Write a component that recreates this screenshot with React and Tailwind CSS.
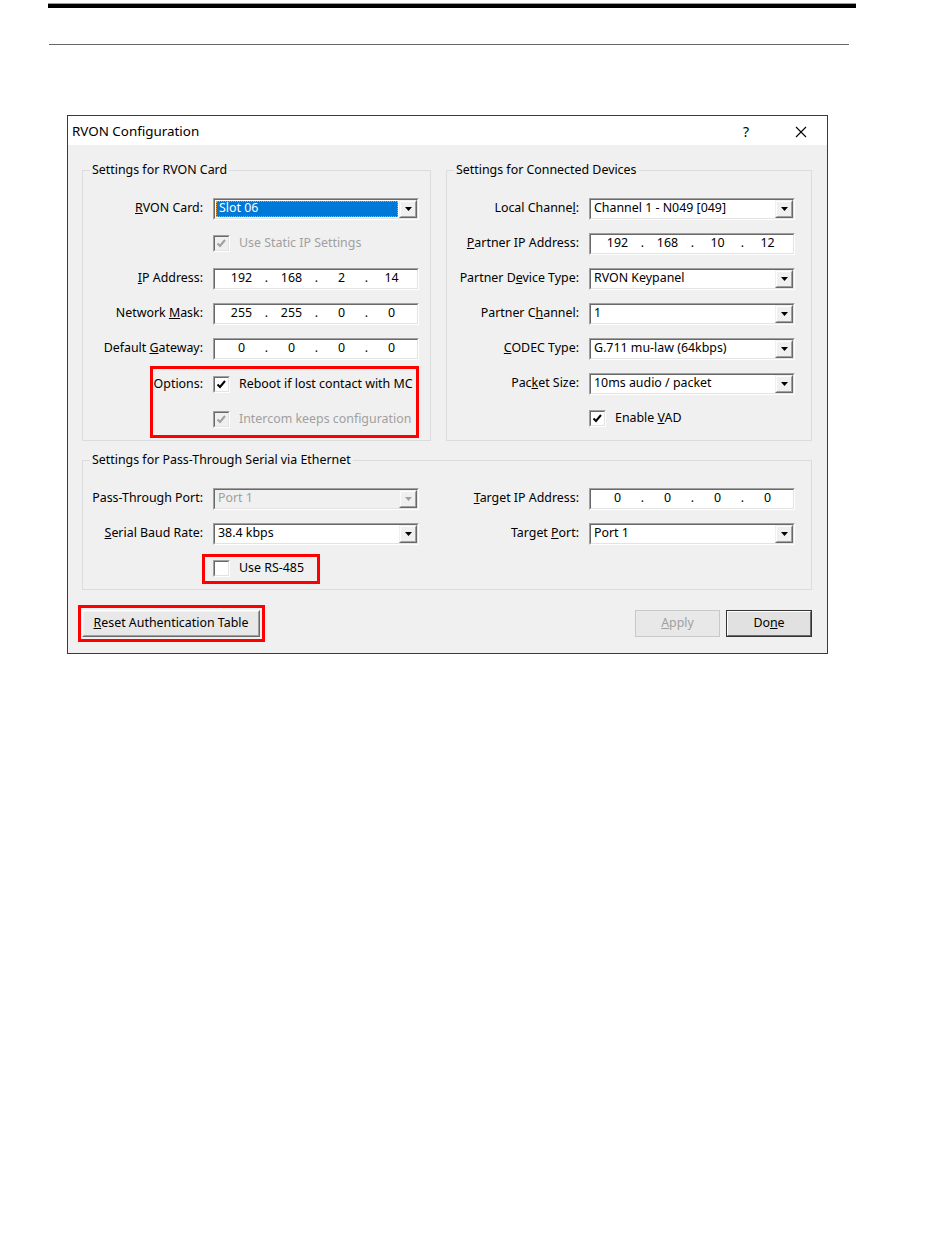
import React from 'react';

// Windows-style 3D sunken frame used by edits, combos and checkboxes
function Sunken({ className = '', inner = 'bg-white', children }) {
  return (
    <div className={`border border-t-[#a0a0a0] border-l-[#a0a0a0] border-r-white border-b-white ${className}`}>
      <div className={`h-full border border-t-[#696969] border-l-[#696969] border-r-[#e3e3e3] border-b-[#e3e3e3] ${inner}`}>
        {children}
      </div>
    </div>
  );
}

function Arrow({ disabled }) {
  return (
    <svg width="7" height="4" viewBox="0 0 7 4">
      <path d="M0 0h7L3.5 4z" fill={disabled ? '#a0a0a0' : '#000'} />
    </svg>
  );
}

function Combo({ value, selected, disabled }) {
  return (
    <Sunken className="w-[206px] h-[22px]" inner={disabled ? 'bg-[#f0f0f0]' : 'bg-white'}>
      <div className="flex h-full items-stretch">
        <div className="flex-1 flex items-center p-px min-w-0">
          {selected ? (
            <span className="flex-1 h-full flex items-center px-[2px] bg-[#0078d7] text-white border border-dotted border-[#e8a040]">
              {value}
            </span>
          ) : (
            <span className={`px-[2px] ${disabled ? 'text-[#a0a0a0]' : ''}`}>{value}</span>
          )}
        </div>
        <div className="w-[18px] border border-t-[#f0f0f0] border-l-[#f0f0f0] border-r-[#696969] border-b-[#696969]">
          <div className="h-full flex items-center justify-center bg-[#f0f0f0] border border-t-white border-l-white border-r-[#a0a0a0] border-b-[#a0a0a0]">
            <Arrow disabled={disabled} />
          </div>
        </div>
      </div>
    </Sunken>
  );
}

function IpField({ parts }) {
  return (
    <Sunken className="w-[206px] h-[22px]">
      <div className="flex h-full items-center pl-[8px]">
        {parts.map((p, i) => (
          <React.Fragment key={i}>
            {i > 0 && <span className="w-[13px] text-center">.</span>}
            <span className="w-[37px] text-center">{p}</span>
          </React.Fragment>
        ))}
      </div>
    </Sunken>
  );
}

function Check({ checked, disabled, children }) {
  return (
    <div className="flex items-center gap-[9px]">
      <Sunken className="w-[17px] h-[17px]" inner={disabled ? 'bg-[#f0f0f0]' : 'bg-white'}>
        {checked && (
          <svg width="15" height="15" viewBox="0 0 15 15" className="-mt-px -ml-px">
            <path d="M3.5 7.5l2.5 2.5 5-6" fill="none" stroke={disabled ? '#a0a0a0' : '#000'} strokeWidth="2" />
          </svg>
        )}
      </Sunken>
      <span className={disabled ? 'text-[#a0a0a0]' : ''}>{children}</span>
    </div>
  );
}

function Row({ label, labelW = 'w-[120px]', children }) {
  return (
    <div className="h-[35px] flex items-center gap-[10px]">
      <div className={`${labelW} text-right whitespace-nowrap`}>{label}</div>
      {children}
    </div>
  );
}

function Group({ title, className = '', children }) {
  return (
    <fieldset className={`border border-[#dcdcdc] ${className}`}>
      <legend className="ml-[7px] px-[2px] leading-[16px]">{title}</legend>
      {children}
    </fieldset>
  );
}

function Button({ children, className = '', disabled, isDefault }) {
  if (isDefault) {
    return (
      <div className={`h-[27px] border border-[#333] ${className}`}>
        <div className="h-full border border-t-white border-l-white border-r-[#696969] border-b-[#696969] bg-[#e1e1e1] flex items-center justify-center">
          {children}
        </div>
      </div>
    );
  }
  return (
    <div className={`h-[27px] border ${disabled ? 'border-[#c8c8c8] text-[#a0a0a0]' : 'border-t-white border-l-white border-r-[#696969] border-b-[#696969]'} ${className}`}>
      <div className={`h-full flex items-center justify-center bg-[#e8e8e8] border ${disabled ? 'border-[#e8e8e8]' : 'border-t-[#f0f0f0] border-l-[#f0f0f0] border-r-[#a0a0a0] border-b-[#a0a0a0]'}`}>
        {children}
      </div>
    </div>
  );
}

export default function App() {
  return (
    <div className="min-h-screen bg-white text-black text-[12.4px] font-['Noto_Sans',sans-serif]">
      {/* page header rules */}
      <div className="pt-[3px]">
        <div className="ml-[48px] w-[808px] h-[5px] bg-black border-t border-[#9a9a9a]" />
      </div>
      <div className="mt-[36px] ml-[49px] w-[800px] h-px bg-[#666]" />

      {/* dialog */}
      <div className="mt-[70px] ml-[67px] w-[761px] border border-[#3a3a3a] bg-[#f0f0f0]">
        <div className="h-[29px] bg-white flex items-center pl-[4px] pr-[20px] pt-[2px]">
          <span className="flex-1 text-[13.4px]">RVON Configuration</span>
          <span className="text-[14px] mr-[46px]">?</span>
          <svg width="12" height="12" viewBox="0 0 12 12">
            <path d="M1 1l10 10M11 1L1 11" stroke="#000" strokeWidth="1.1" />
          </svg>
        </div>

        <div className="pl-[14px] pr-[15px] pt-[17px] pb-[11px]">
          <div className="flex gap-[15px]">
            <Group title="Settings for RVON Card" className="w-[349px] pt-[13px] pb-[2px]">
              <Row label={<><u>R</u>VON Card:</>}><Combo value="Slot 06" selected /></Row>
              <Row label=""><Check checked disabled>Use Static IP Settings</Check></Row>
              <Row label={<><u>I</u>P Address:</>}><IpField parts={['192', '168', '2', '14']} /></Row>
              <Row label={<>Network <u>M</u>ask:</>}><IpField parts={['255', '255', '0', '0']} /></Row>
              <Row label={<>Default <u>G</u>ateway:</>}><IpField parts={['0', '0', '0', '0']} /></Row>
              <div className="ml-[67px] w-[269px] h-[72px] border-[3px] border-[#ff0000]">
                <div className="h-[31px] flex items-center gap-[10px]">
                  <div className="w-[50px] text-right">Options:</div>
                  <Check checked>Reboot if lost contact with MC</Check>
                </div>
                <div className="h-[35px] flex items-center pl-[60px] pt-[4px]">
                  <Check checked disabled>Intercom keeps configuration</Check>
                </div>
              </div>
            </Group>

            <Group title="Settings for Connected Devices" className="w-[366px] pt-[13px] pb-[4px]">
              <Row labelW="w-[132px]" label={<>Local Channe<u>l</u>:</>}><Combo value="Channel 1 - N049 [049]" /></Row>
              <Row labelW="w-[132px]" label={<><u>P</u>artner IP Address:</>}><IpField parts={['192', '168', '10', '12']} /></Row>
              <Row labelW="w-[132px]" label={<>Partner D<u>e</u>vice Type:</>}><Combo value="RVON Keypanel" /></Row>
              <Row labelW="w-[132px]" label={<>Partner C<u>h</u>annel:</>}><Combo value="1" /></Row>
              <Row labelW="w-[132px]" label={<><u>C</u>ODEC Type:</>}><Combo value="G.711 mu-law (64kbps)" /></Row>
              <Row labelW="w-[132px]" label={<>Pac<u>k</u>et Size:</>}><Combo value="10ms audio / packet" /></Row>
              <Row labelW="w-[132px]" label=""><Check checked>Enable <u>V</u>AD</Check></Row>
            </Group>
          </div>

          <Group title="Settings for Pass-Through Serial via Ethernet" className="mt-[11px] pt-[13px] pb-[3px]">
            <div className="flex">
              <Row label={<>Pass-Throu<u>g</u>h Port:</>}><Combo value="Port 1" disabled /></Row>
              <Row labelW="w-[160px]" label={<><u>T</u>arget IP Address:</>}><IpField parts={['0', '0', '0', '0']} /></Row>
            </div>
            <div className="flex">
              <Row label={<><u>S</u>erial Baud Rate:</>}><Combo value="38.4 kbps" /></Row>
              <Row labelW="w-[160px]" label={<>Target <u>P</u>ort:</>}><Combo value="Port 1" /></Row>
            </div>
            <div className="h-[35px] flex items-center">
              <div className="ml-[119px] w-[118px] h-[30px] border-[3px] border-[#ff0000] flex items-center pl-[8px]">
                <Check>Use RS-485</Check>
              </div>
            </div>
          </Group>

          <div className="mt-[15px] flex items-center">
            <div className="-ml-[4px] border-[3px] border-[#ff0000] pl-px pr-[2px] py-[2px]">
              <Button className="w-[178px]"><span><u>R</u>eset Authentication Table</span></Button>
            </div>
            <div className="flex-1" />
            <Button disabled className="w-[85px]"><span><u>A</u>pply</span></Button>
            <Button isDefault className="w-[86px] ml-[6px]"><span>Do<u>n</u>e</span></Button>
          </div>
        </div>
      </div>
    </div>
  );
}
